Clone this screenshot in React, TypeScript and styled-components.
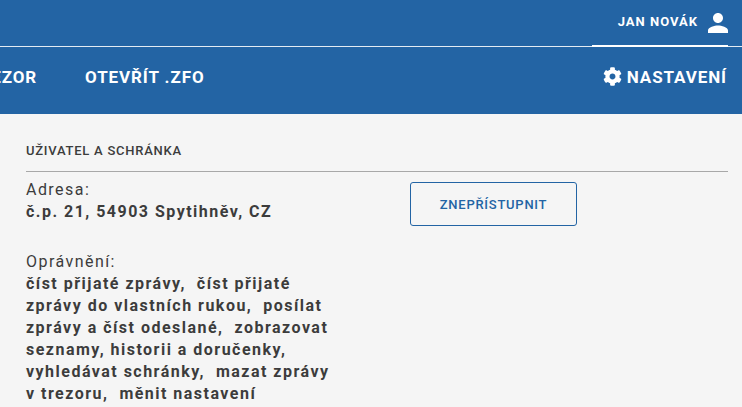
import React from "react";
import styled, { createGlobalStyle } from "styled-components";
import { FaCog } from "react-icons/fa";

const permissions = [
  "číst přijaté zprávy",
  "číst přijaté zprávy do vlastních rukou",
  "posílat zprávy a číst odeslané",
  "zobrazovat seznamy, historii a doručenky",
  "vyhledávat schránky",
  "mazat zprávy v trezoru",
  "měnit nastavení",
];

const App = () => {
  return (
    <Page>
      <GlobalStyle />
      <Header>
        <UserBar>
          <UserBox>
            <UserName>Jan Novák</UserName>
            <UserIcon width="24" height="24" viewBox="0 0 24 24" fill="#fff">
              <path d="M12 12c2.76 0 5-2.24 5-5s-2.24-5-5-5-5 2.24-5 5 2.24 5 5 5zm0 2.5c-3.34 0-10 1.68-10 5V22h20v-2.500c0-3.320-6.660-5-10-5z" />
            </UserIcon>
          </UserBox>
        </UserBar>
        <NavBar>
          <NavGroup>
            <NavItem>Trezor</NavItem>
            <NavItem>Otevřít .zfo</NavItem>
          </NavGroup>
          <SettingsItem>
            <FaCog size={19} />
            Nastavení
          </SettingsItem>
        </NavBar>
      </Header>
      <Content>
        <SectionTitle>Uživatel a schránka</SectionTitle>
        <Columns>
          <InfoColumn>
            <Field>
              <Label>Adresa:</Label>
              <Value>č.p. 21, 54903 Spytihněv, CZ</Value>
            </Field>
            <Field>
              <Label>Oprávnění:</Label>
              <Value>
                {permissions.map((item, i) => (
                  <React.Fragment key={item}>
                    {item}
                    {i < permissions.length - 1 ? ",\u00a0 " : ""}
                  </React.Fragment>
                ))}
              </Value>
            </Field>
          </InfoColumn>
          <OutlineButton>Znepřístupnit</OutlineButton>
        </Columns>
      </Content>
    </Page>
  );
};

export default App;

const GlobalStyle = createGlobalStyle`
  html, body {
    margin: 0;
    height: 100%;
    overflow: hidden;
    background: #f5f5f5;
  }
  body {
    font-family: Roboto, "Liberation Sans", sans-serif;
  }
`;

const Page = styled.div`
  width: 742px;
  height: 407px;
  overflow: hidden;
`;

const Header = styled.header`
  background: #2364a4;
  height: 114px;
  color: #fff;
`;

const UserBar = styled.div`
  display: flex;
  justify-content: flex-end;
  height: 47px;
  padding-right: 14px;
  border-bottom: 1px solid #e3ebf3;
  box-sizing: border-box;
`;

const UserBox = styled.div`
  display: flex;
  align-items: center;
  justify-content: flex-end;
  gap: 8px;
  width: 136px;
  height: 47px;
  box-sizing: border-box;
  border-bottom: 2px solid #fff;
`;

const UserName = styled.span`
  margin-bottom: 3px;
  font-size: 13px;
  font-weight: 700;
  letter-spacing: 1px;
  text-transform: uppercase;
`;

const UserIcon = styled.svg`
  margin-right: -2px;
`;

const NavBar = styled.nav`
  display: flex;
  justify-content: space-between;
  align-items: center;
  height: 59px;
  padding-right: 15px;
`;

const NavGroup = styled.div`
  display: flex;
  gap: 48px;
  margin-left: -32px;
`;

const NavItem = styled.a`
  font-size: 17px;
  font-weight: 700;
  letter-spacing: 0.9px;
  text-transform: uppercase;
`;

const SettingsItem = styled(NavItem)`
  display: flex;
  align-items: center;
  gap: 5px;
`;

const Content = styled.main`
  padding: 29px 14px 0 26px;
  color: #3c3c3c;
`;

const SectionTitle = styled.h2`
  margin: 0;
  padding-bottom: 12px;
  font-size: 13px;
  line-height: 16px;
  font-weight: 500;
  letter-spacing: 0.75px;
  text-transform: uppercase;
  border-bottom: 1px solid #a8a8a8;
`;

const Columns = styled.div`
  display: flex;
  align-items: flex-start;
  gap: 79px;
`;

const InfoColumn = styled.div`
  width: 305px;
  padding-top: 7px;
`;

const Field = styled.div`
  margin-bottom: 28px;
`;

const Label = styled.div`
  font-size: 16px;
  line-height: 22px;
  font-weight: 400;
  letter-spacing: 1.45px;
`;

const Value = styled.div`
  font-size: 16px;
  line-height: 22px;
  font-weight: 700;
  letter-spacing: 1.48px;
`;

const OutlineButton = styled.button`
  margin-top: 10px;
  width: 167px;
  height: 44px;
  background: transparent;
  border: 1px solid #2364a4;
  border-radius: 3px;
  color: #2364a4;
  font-family: inherit;
  font-size: 13px;
  font-weight: 500;
  letter-spacing: 0.75px;
  text-transform: uppercase;
`;
